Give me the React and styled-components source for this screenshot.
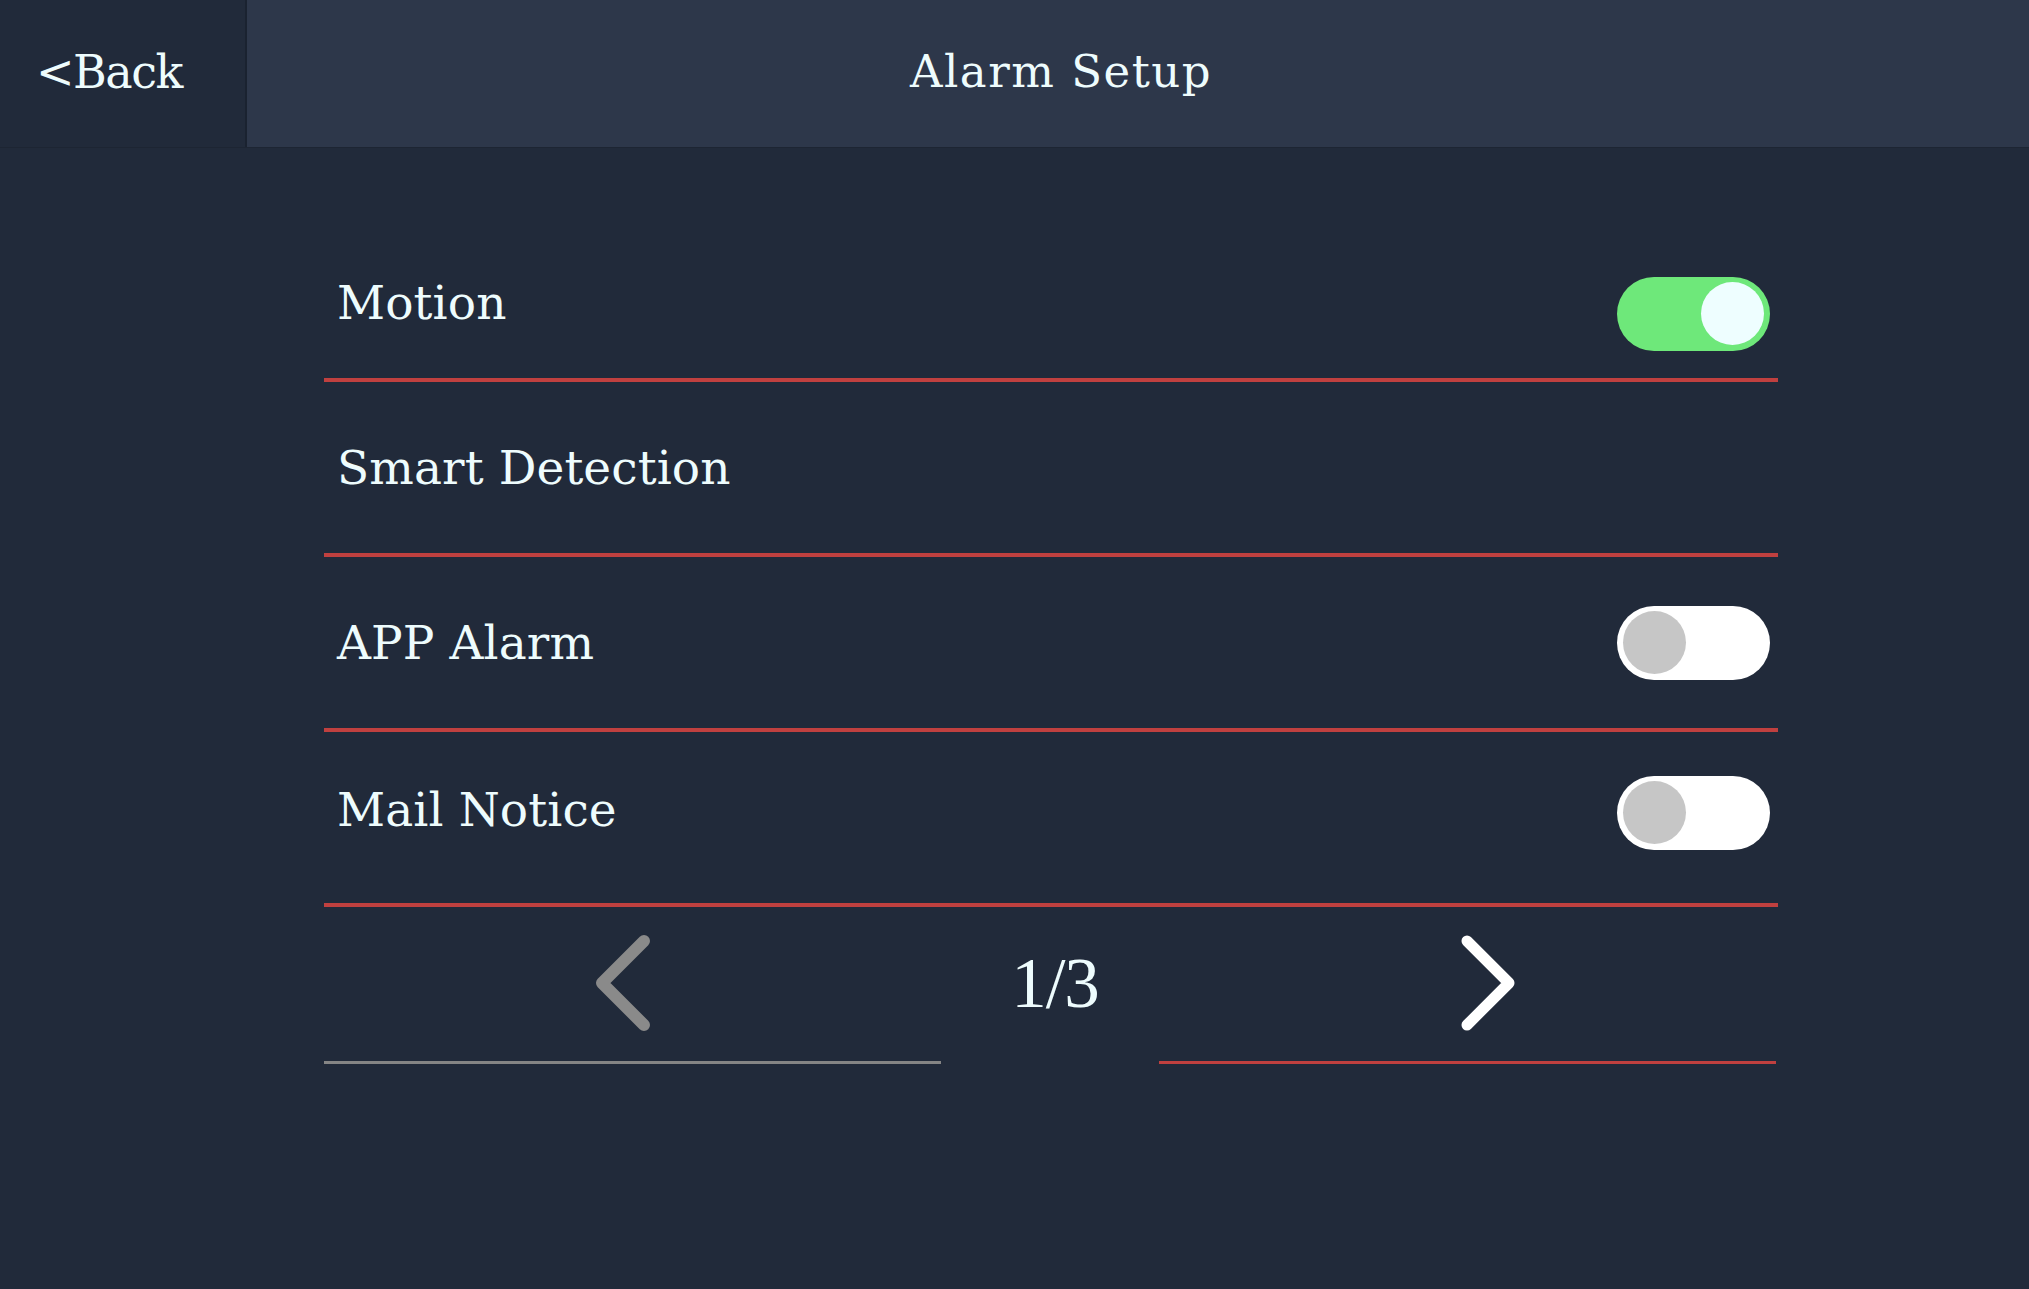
import React, { useState } from "react";
import styled, { createGlobalStyle } from "styled-components";

const Global = createGlobalStyle`
  html, body { margin: 0; padding: 0; }
  body { background: #212a3a; font-family: "DejaVu Serif", "Liberation Serif", serif; }
`;

const Page = styled.div`
  min-height: 100vh;
  background: #212a3a;
  display: flex;
  flex-direction: column;
`;

const Header = styled.header`
  height: 148px;
  display: flex;
  background: #2d374a;
  border-bottom: 1px solid #1d2533;
  box-sizing: border-box;
`;

const BackButton = styled.button`
  width: 247px;
  height: 100%;
  background: #212a3a;
  border: none;
  border-right: 2px solid #1a2230;
  color: #eefcfd;
  font-family: "DejaVu Serif", serif;
  font-size: 46px;
  letter-spacing: -1.5px;
  text-align: left;
  padding: 0 0 4px 36px;
  cursor: pointer;
`;

const Title = styled.h1`
  flex: 1;
  margin: 0;
  display: flex;
  align-items: center;
  justify-content: center;
  padding-right: 154px;
  padding-bottom: 4px;
  color: #eefcfd;
  font-weight: normal;
  font-size: 45px;
  letter-spacing: 1.5px;
`;

const Content = styled.main`
  padding: 59px 251px 0 324px;
  display: flex;
  flex-direction: column;
`;

const Row = styled.div`
  box-sizing: border-box;
  height: 175px;
  border-bottom: 4px solid #c0403f;
  display: flex;
  align-items: center;
  justify-content: space-between;
  padding: ${(p) => p.$pt || 0}px 8px ${(p) => p.$pb || 0}px 13px;
`;

const Label = styled.span`
  color: #eefcfd;
  font-size: 47px;
  letter-spacing: 0.1px;
`;

const Track = styled.button`
  width: 153px;
  height: 74px;
  border-radius: 37px;
  border: none;
  padding: 0 6px;
  display: flex;
  align-items: center;
  justify-content: ${(p) => (p.$on ? "flex-end" : "flex-start")};
  background: ${(p) => (p.$on ? "#6ee87a" : "#ffffff")};
  margin-top: ${(p) => p.$drop || 0}px;
  cursor: pointer;
`;

const Knob = styled.span`
  width: 63px;
  height: 63px;
  border-radius: 50%;
  background: ${(p) => (p.$on ? "#eefeff" : "#c6c6c6")};
`;

const Toggle = ({ on, onClick, drop }) => (
  <Track $on={on} $drop={drop} onClick={onClick}>
    <Knob $on={on} />
  </Track>
);

const Pager = styled.div`
  display: flex;
  align-items: stretch;
`;

const PagerSide = styled.button`
  box-sizing: border-box;
  width: 617px;
  flex: none;
  background: none;
  border: none;
  border-bottom: 3px solid ${(p) => p.$line};
  padding: 27px ${(p) => p.$pr || 0}px 29px ${(p) => p.$pl || 0}px;
  display: flex;
  justify-content: center;
  cursor: pointer;
`;

const PageCount = styled.div`
  box-sizing: border-box;
  width: 218px;
  flex: none;
  display: flex;
  align-items: center;
  justify-content: center;
  padding: 0 0 4px 10px;
  color: #eefcfd;
  font-family: "Liberation Serif", serif;
  font-size: 71px;
  letter-spacing: -1px;
`;

const Chevron = ({ dir, color }) => (
  <svg width="56" height="98" viewBox="0 0 56 98">
    <polyline
      points={dir === "left" ? "49,7 7,49 49,91" : "7,7 49,49 7,91"}
      fill="none"
      stroke={color}
      strokeWidth={dir === "left" ? 12 : 11}
      strokeLinecap="round"
      strokeLinejoin="round"
    />
  </svg>
);

export default function App() {
  const [motion, setMotion] = useState(true);
  const [app, setApp] = useState(false);
  const [mail, setMail] = useState(false);
  return (
    <Page>
      <Global />
      <Header>
        <BackButton>&lt;Back</BackButton>
        <Title>Alarm Setup</Title>
      </Header>
      <Content>
        <Row $pt={20}>
          <Label>Motion</Label>
          <Toggle on={motion} drop={22} onClick={() => setMotion(!motion)} />
        </Row>
        <Row>
          <Label>Smart Detection</Label>
        </Row>
        <Row>
          <Label>APP Alarm</Label>
          <Toggle on={app} onClick={() => setApp(!app)} />
        </Row>
        <Row $pb={16}>
          <Label>Mail Notice</Label>
          <Toggle on={mail} drop={6} onClick={() => setMail(!mail)} />
        </Row>
        <Pager>
          <PagerSide $line="#858585" $pr={19}>
            <Chevron dir="left" color="#8a8a8a" />
          </PagerSide>
          <PageCount>1/3</PageCount>
          <PagerSide $line="#c0403f" $pl={41}>
            <Chevron dir="right" color="#ffffff" />
          </PagerSide>
        </Pager>
      </Content>
    </Page>
  );
}
